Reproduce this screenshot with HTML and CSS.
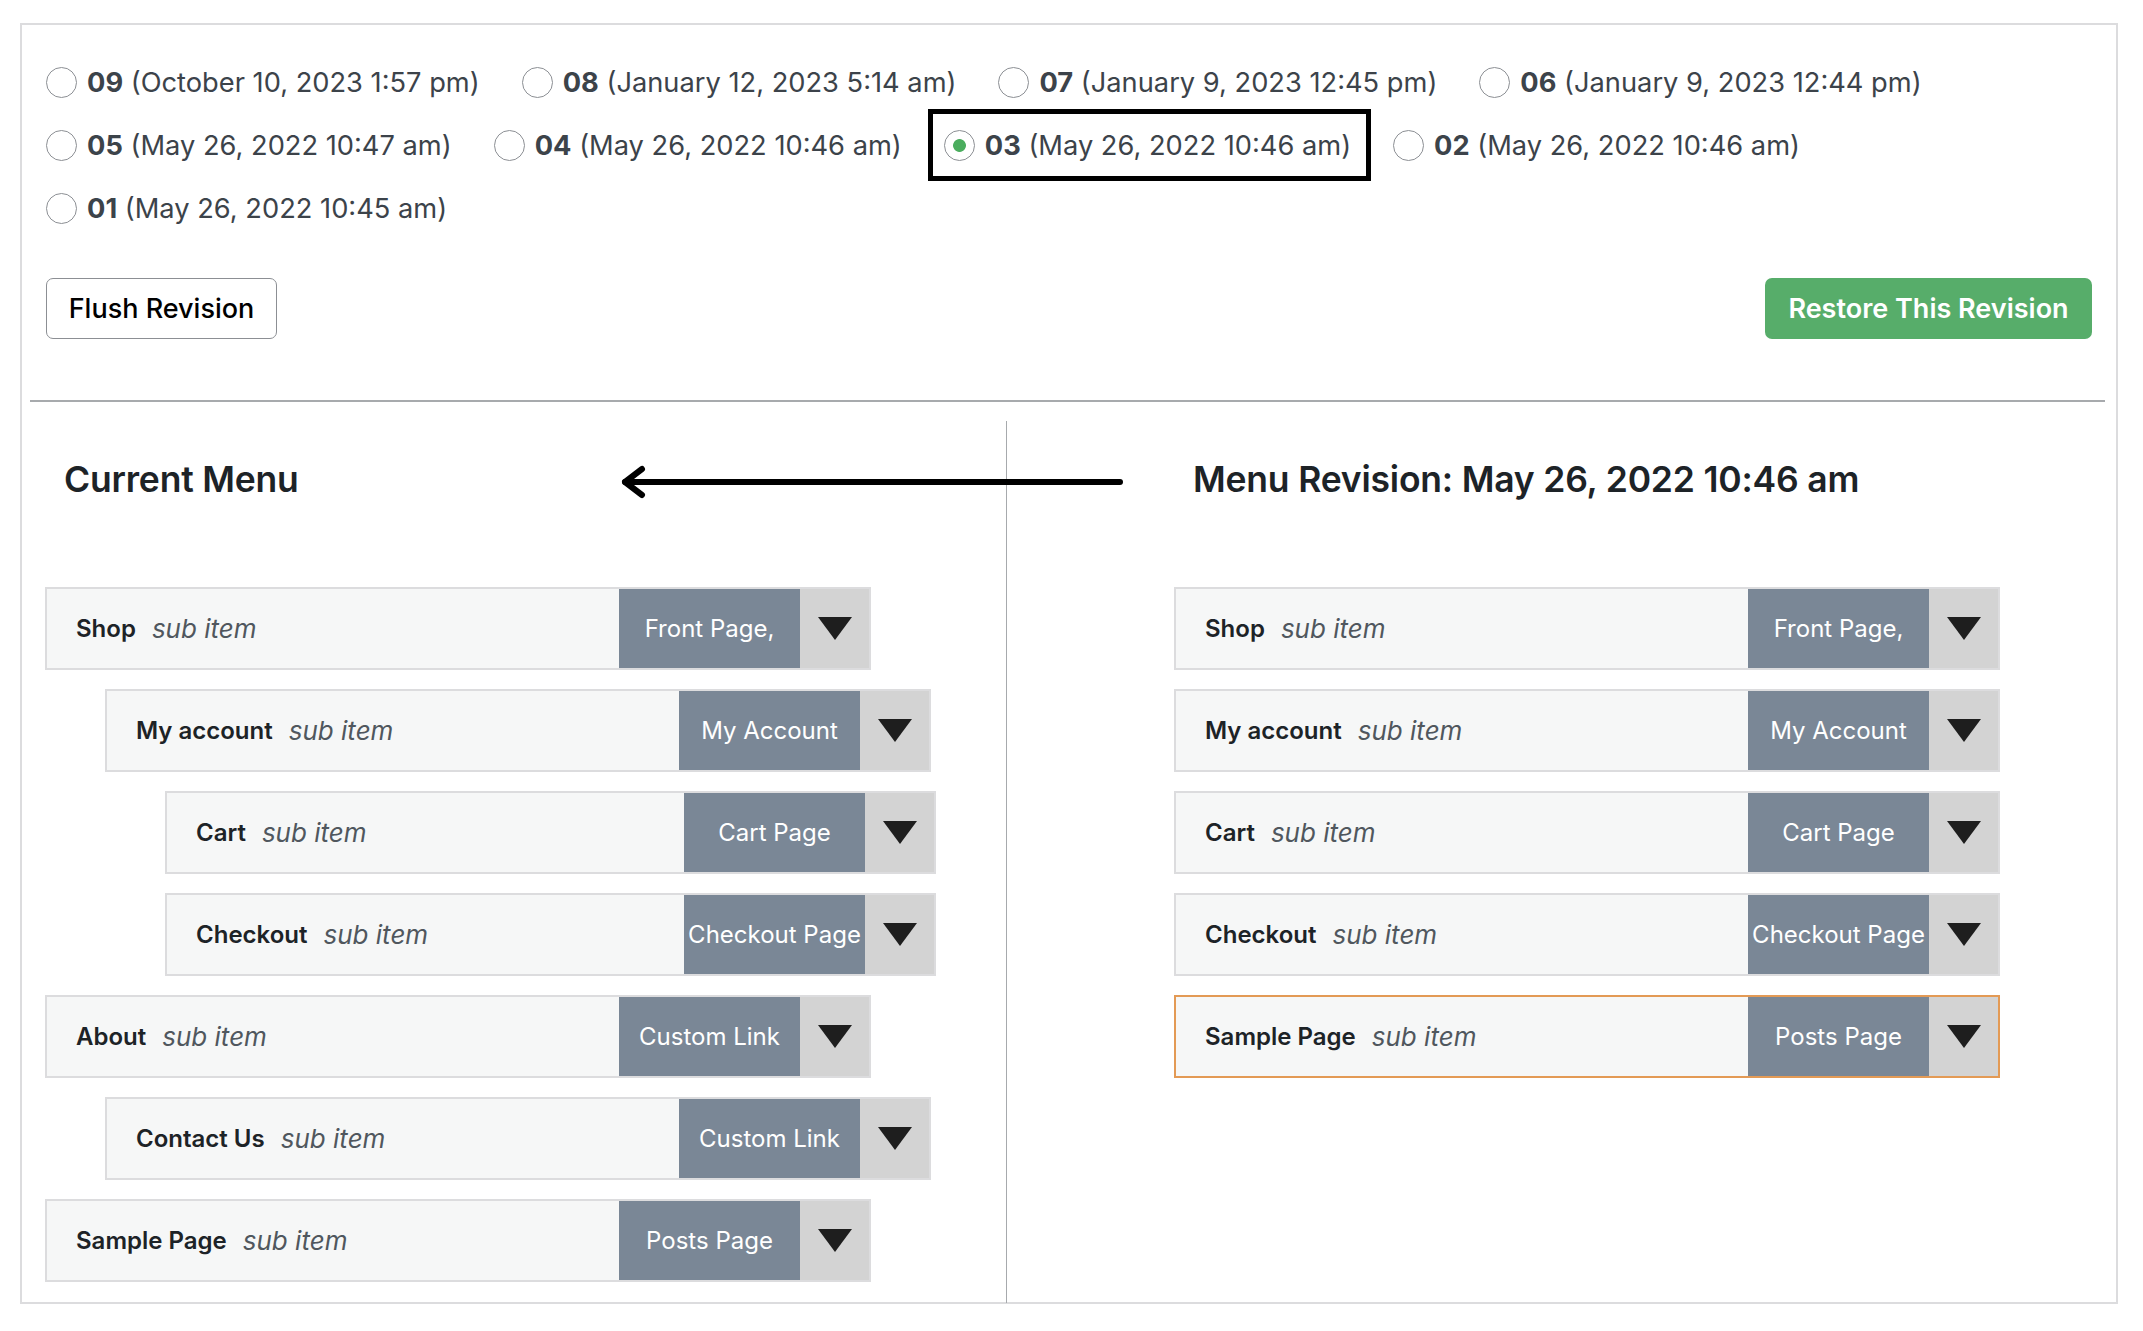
FILE: index.html
```html
<!DOCTYPE html>
<html lang="en">
<head>
<meta charset="utf-8">
<title>Menu Revisions</title>
<link rel="stylesheet" href="styles.css">
</head>
<body>
<div class="panel">
  <div class="revisions">
    <label class="rev"><input type="radio" name="rev"><span><b>09</b> (October 10, 2023 1:57 pm)</span></label>
    <label class="rev"><input type="radio" name="rev"><span><b>08</b> (January 12, 2023 5:14 am)</span></label>
    <label class="rev"><input type="radio" name="rev"><span><b>07</b> (January 9, 2023 12:45 pm)</span></label>
    <label class="rev"><input type="radio" name="rev"><span><b>06</b> (January 9, 2023 12:44 pm)</span></label>
    <label class="rev"><input type="radio" name="rev"><span><b>05</b> (May 26, 2022 10:47 am)</span></label>
    <label class="rev"><input type="radio" name="rev"><span><b>04</b> (May 26, 2022 10:46 am)</span></label>
    <label class="rev is-current"><input type="radio" name="rev" checked><span><b>03</b> (May 26, 2022 10:46 am)</span></label>
    <label class="rev"><input type="radio" name="rev"><span><b>02</b> (May 26, 2022 10:46 am)</span></label>
    <label class="rev"><input type="radio" name="rev"><span><b>01</b> (May 26, 2022 10:45 am)</span></label>
  </div>

  <div class="actions">
    <button class="btn btn-flush" type="button">Flush Revision</button>
    <button class="btn btn-restore" type="button">Restore This Revision</button>
  </div>

  <hr class="divider">

  <div class="columns">
    <section class="col col-current">
      <h2 class="col-title">Current Menu</h2>
      <ul class="menu">
        <li class="menu-row"><div class="item"><span class="item-title"><b>Shop</b><i>sub item</i></span><span class="item-type">Front Page,</span><span class="item-toggle"><span class="tri"></span></span></div></li>
        <li class="menu-row depth-1"><div class="item"><span class="item-title"><b>My account</b><i>sub item</i></span><span class="item-type">My Account</span><span class="item-toggle"><span class="tri"></span></span></div></li>
        <li class="menu-row depth-2"><div class="item"><span class="item-title"><b>Cart</b><i>sub item</i></span><span class="item-type">Cart Page</span><span class="item-toggle"><span class="tri"></span></span></div></li>
        <li class="menu-row depth-2"><div class="item"><span class="item-title"><b>Checkout</b><i>sub item</i></span><span class="item-type">Checkout Page</span><span class="item-toggle"><span class="tri"></span></span></div></li>
        <li class="menu-row"><div class="item"><span class="item-title"><b>About</b><i>sub item</i></span><span class="item-type">Custom Link</span><span class="item-toggle"><span class="tri"></span></span></div></li>
        <li class="menu-row depth-1"><div class="item"><span class="item-title"><b>Contact Us</b><i>sub item</i></span><span class="item-type">Custom Link</span><span class="item-toggle"><span class="tri"></span></span></div></li>
        <li class="menu-row"><div class="item"><span class="item-title"><b>Sample Page</b><i>sub item</i></span><span class="item-type">Posts Page</span><span class="item-toggle"><span class="tri"></span></span></div></li>
      </ul>
    </section>

    <section class="col col-revision">
      <h2 class="col-title">Menu Revision: May 26, 2022 10:46 am</h2>
      <ul class="menu">
        <li class="menu-row"><div class="item"><span class="item-title"><b>Shop</b><i>sub item</i></span><span class="item-type">Front Page,</span><span class="item-toggle"><span class="tri"></span></span></div></li>
        <li class="menu-row"><div class="item"><span class="item-title"><b>My account</b><i>sub item</i></span><span class="item-type">My Account</span><span class="item-toggle"><span class="tri"></span></span></div></li>
        <li class="menu-row"><div class="item"><span class="item-title"><b>Cart</b><i>sub item</i></span><span class="item-type">Cart Page</span><span class="item-toggle"><span class="tri"></span></span></div></li>
        <li class="menu-row"><div class="item"><span class="item-title"><b>Checkout</b><i>sub item</i></span><span class="item-type">Checkout Page</span><span class="item-toggle"><span class="tri"></span></span></div></li>
        <li class="menu-row"><div class="item item-changed"><span class="item-title"><b>Sample Page</b><i>sub item</i></span><span class="item-type">Posts Page</span><span class="item-toggle"><span class="tri"></span></span></div></li>
      </ul>
    </section>

    <svg class="arrow" width="504" height="36" viewBox="0 0 504 36" aria-hidden="true">
      <path d="M500 18 H5" fill="none" stroke="#000" stroke-width="6" stroke-linecap="round"/>
      <path d="M22 5 L5 18 L22 31" fill="none" stroke="#000" stroke-width="6" stroke-linecap="round" stroke-linejoin="round"/>
    </svg>
  </div>
</div>
</body>
</html>
```

FILE: styles.css
```css
* { box-sizing: border-box; }

html, body {
  margin: 0;
  padding: 0;
  background: #fff;
}

body {
  font-family: Inter, "Noto Sans", "Liberation Sans", sans-serif;
  color: #1d2327;
}

.panel {
  margin: 23px 25px 0 20px;
  border: 2px solid #dcdcde;
  height: 1281px;
}

/* revision choices */
.revisions {
  display: flex;
  flex-wrap: wrap;
  column-gap: 42px;
  row-gap: 32px;
  padding: 42px 24px 0 24px;
}

.rev {
  display: flex;
  align-items: center;
  gap: 10px;
  height: 31px;
  font-size: 27.25px;
  line-height: 31px;
  color: #3c434a;
  white-space: nowrap;
}

.rev b { font-weight: 700; }

.rev input {
  appearance: none;
  -webkit-appearance: none;
  margin: 0;
  width: 31px;
  height: 31px;
  border: 1.5px solid #8c8f94;
  border-radius: 50%;
  background: #fff;
  flex: none;
}

.rev input:checked {
  background: radial-gradient(circle, #4bad5e 0 6px, #fff 6.8px);
}

.is-current { position: relative; }

.is-current::after {
  content: "";
  position: absolute;
  top: -21px;
  bottom: -20px;
  left: -16px;
  right: -20px;
  border: 5px solid #000;
}

/* buttons */
.actions {
  display: flex;
  justify-content: space-between;
  padding: 54px 24px 0 24px;
}

.btn {
  height: 61px;
  border-radius: 7px;
  font-family: inherit;
  font-size: 27px;
  font-weight: 500;
  cursor: pointer;
}

.btn-flush {
  width: 231px;
  background: #fff;
  border: 1.5px solid #8c8f94;
  color: #000;
}

.btn-restore {
  width: 327px;
  background: #57ad6a;
  border: 0;
  color: #fff;
  font-weight: 600;
}

.divider {
  margin: 61px 11px 0 8px;
  border: 0;
  border-top: 2px solid #a7aaad;
  height: 0;
}

/* columns */
.columns {
  position: relative;
  display: flex;
  margin-top: 19px;
}

.col {
  padding-top: 37px;
  padding-bottom: 21px;
}

.col-current {
  width: 985px;
  padding-left: 23px;
  padding-right: 70px;
  border-right: 1px solid #a7aaad;
}

.col-revision {
  flex: 1;
  padding-left: 167px;
}

.col-title {
  margin: 0 0 85px 19px;
  font-size: 35.5px;
  line-height: 44px;
  font-weight: 600;
  color: #1d2327;
  letter-spacing: -0.2px;
}

.menu {
  list-style: none;
  margin: 0;
  padding: 0;
  display: flex;
  flex-direction: column;
  gap: 19px;
}

.depth-1 { padding-left: 60px; }
.depth-2 { padding-left: 120px; }

.item {
  display: flex;
  width: 826px;
  max-width: 100%;
  height: 83px;
  border: 2px solid #dcdcde;
  background: #f6f7f7;
  font-size: 24px;
}

.item-changed { border-color: #e39a55; }

.item-title {
  flex: 1;
  min-width: 0;
  display: flex;
  align-items: center;
  gap: 16px;
  padding-left: 29px;
  white-space: nowrap;
  overflow: hidden;
}

.item-title b {
  font-weight: 600;
  color: #1d2327;
}

.item-title i {
  color: #50575e;
  font-style: italic;
  font-size: 26px;
}

.item-type {
  flex: none;
  width: 181px;
  display: flex;
  align-items: center;
  justify-content: center;
  background: #7a8796;
  color: #fff;
  white-space: nowrap;
}

.item-toggle {
  flex: none;
  width: 69px;
  display: flex;
  align-items: center;
  justify-content: center;
  background: #d3d3d3;
}

.tri {
  width: 0;
  height: 0;
  border-left: 17px solid transparent;
  border-right: 17px solid transparent;
  border-top: 23px solid #1e1e1e;
}

.arrow {
  position: absolute;
  left: 598px;
  top: 43px;
}
```
